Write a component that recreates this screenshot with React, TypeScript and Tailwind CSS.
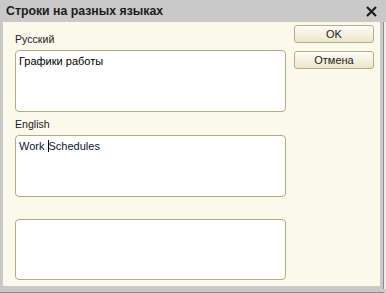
const font = { fontFamily: '"Liberation Sans", Arial, sans-serif' };

function TextBox({ children, h }: { children?: React.ReactNode; h: string }) {
  return (
    <div
      className={`${h} w-[271px] rounded-[4px] border border-[#b3ac80] bg-white px-[3px] pt-[3px] text-[11px] leading-[14px]`}
    >
      {children}
    </div>
  );
}

function Btn({ label }: { label: string }) {
  return (
    <div className="flex h-[18px] w-[80px] items-center justify-center rounded-[3px] border border-[#b5ae86] bg-gradient-to-b from-[#fefdf7] to-[#ebe5c9] text-[11px] text-[#222] shadow-[inset_0_1px_0_#ffffff]">
      {label}
    </div>
  );
}

export default function App() {
  return (
    <div className="relative flex h-[293px] w-[386px] flex-col bg-[#c9c9c9] text-[#222]" style={font}>
      {/* заголовок */}
      <div className="flex h-[25px] items-center justify-between pl-[6px] pr-[9px]">
        <span className="text-[12.3px] font-bold text-[#1c1c1c]">Строки на разных языках</span>
        <svg width="11" height="11" viewBox="0 0 11 11">
          <path d="M1 1 L10 10 M10 1 L1 10" stroke="#1c1c1c" strokeWidth="2.2" />
        </svg>
      </div>

      <div className="flex">
        <div className="ml-[3px] flex h-[264px] w-[377px] bg-[#fbf9ec]">
          <div className="flex flex-col pl-[12px] pt-[10px]">
            <div className="h-[18px] text-[10.6px] leading-[14px]">Русский</div>
            <TextBox h="h-[62px]">
              <span className="text-black">Графики работы</span>
            </TextBox>
            <div className="mt-[5px] h-[18px] text-[10.6px] leading-[14px]">English</div>
            <TextBox h="h-[62px]">
              <span className="text-[#0c1630]">
                Work <span className="border-l border-black">Schedules</span>
              </span>
            </TextBox>
            <div className="mt-[22px]" />
            <TextBox h="h-[61px]" />
          </div>
          <div className="flex flex-col gap-[8px] pl-[8px] pt-[3px]">
            <Btn label="OK" />
            <Btn label="Отмена" />
          </div>
        </div>
        <div className="w-[3px]" />
        <div className="h-[267px] w-[1px] bg-[#8c8c8c]" />
        <div className="h-[267px] w-[2px] bg-[#ececec]" />
      </div>
      <div className="mt-[3px] h-[1px] w-[384px] bg-[#8c8c8c]" />
    </div>
  );
}
